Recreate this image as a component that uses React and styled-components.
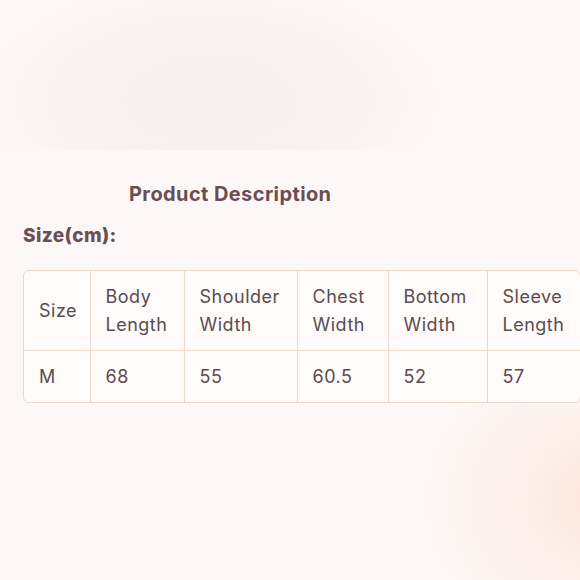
import styled, { createGlobalStyle } from "styled-components";

const GlobalStyle = createGlobalStyle`
  html, body {
    margin: 0;
    padding: 0;
  }
  body {
    font-family: "Inter", "Open Sans", sans-serif;
    background: #fdf8f7;
  }
`;

const sizeRows = [
  { size: "M", body: "68", shoulder: "55", chest: "60.5", bottom: "52", sleeve: "57" },
];

const columns = [
  { key: "size", label: ["Size"], width: 66 },
  { key: "body", label: ["Body", "Length"], width: 94 },
  { key: "shoulder", label: ["Shoulder", "Width"], width: 113 },
  { key: "chest", label: ["Chest", "Width"], width: 91 },
  { key: "bottom", label: ["Bottom", "Width"], width: 99 },
  { key: "sleeve", label: ["Sleeve", "Length"], width: 93 },
];

const App = () => {
  return (
    <Page>
      <GlobalStyle />
      <Hero />
      <Content>
        <Title>Product Description</Title>
        <SubTitle>Size(cm):</SubTitle>
        <TableBox>
          <SizeTable>
            <colgroup>
              {columns.map((col) => (
                <col key={col.key} style={{ width: col.width }} />
              ))}
            </colgroup>
            <thead>
              <tr>
                {columns.map((col) => (
                  <HeadCell key={col.key}>
                    {col.label.map((line) => (
                      <div key={line}>{line}</div>
                    ))}
                  </HeadCell>
                ))}
              </tr>
            </thead>
            <tbody>
              {sizeRows.map((row) => (
                <tr key={row.size}>
                  {columns.map((col) => (
                    <Cell key={col.key}>{row[col.key]}</Cell>
                  ))}
                </tr>
              ))}
            </tbody>
          </SizeTable>
        </TableBox>
      </Content>
      <Footer />
    </Page>
  );
};

const Page = styled.div`
  width: 580px;
  height: 580px;
  overflow: hidden;
  display: flex;
  flex-direction: column;
  background:
    radial-gradient(ellipse 200px 170px at 610px 500px, #fbe2d4 0%, rgba(252, 236, 228, 0.7) 40%, rgba(253, 248, 247, 0) 100%),
    #fdf8f7;
`;

const Hero = styled.div`
  height: 150px;
  background:
    radial-gradient(ellipse 230px 120px at 210px 100px, #f6f0f0 0%, #f7f1f1 45%, rgba(253, 248, 247, 0) 100%),
    #fdf8f7;
`;

const Content = styled.div`
  padding: 28px 0 0 23px;
  display: flex;
  flex-direction: column;
`;

const Title = styled.h2`
  margin: 0 0 0 106px;
  font-size: 20px;
  font-weight: 700;
  letter-spacing: 0.4px;
  line-height: 32px;
  color: #6a4e54;
`;

const SubTitle = styled.h3`
  margin: 12px 0 0 0;
  font-size: 19px;
  font-weight: 800;
  letter-spacing: 0.4px;
  line-height: 28px;
  color: #6a4e54;
`;

const TableBox = styled.div`
  margin-top: 20px;
  width: 556px;
  border: 1.5px solid #ecd8ca;
  border-radius: 6px;
  overflow: hidden;
  background: #fefbfa;
`;

const SizeTable = styled.table`
  width: 100%;
  table-layout: fixed;
  border-collapse: collapse;
  color: #5b4b50;
  font-size: 18px;
  letter-spacing: 0.5px;

  tbody tr td {
    border-top: 1.5px solid #ecd8ca;
  }
  th + th,
  td + td {
    border-left: 1.5px solid #ecd8ca;
  }
`;

const HeadCell = styled.th`
  height: 79px;
  padding: 0 0 0 15px;
  text-align: left;
  font-weight: 400;
  line-height: 28px;
  vertical-align: middle;
`;

const Cell = styled.td`
  height: 51px;
  padding: 0 0 0 15px;
  line-height: 28px;
`;

const Footer = styled.div`
  flex: 1;
`;

export default App;
